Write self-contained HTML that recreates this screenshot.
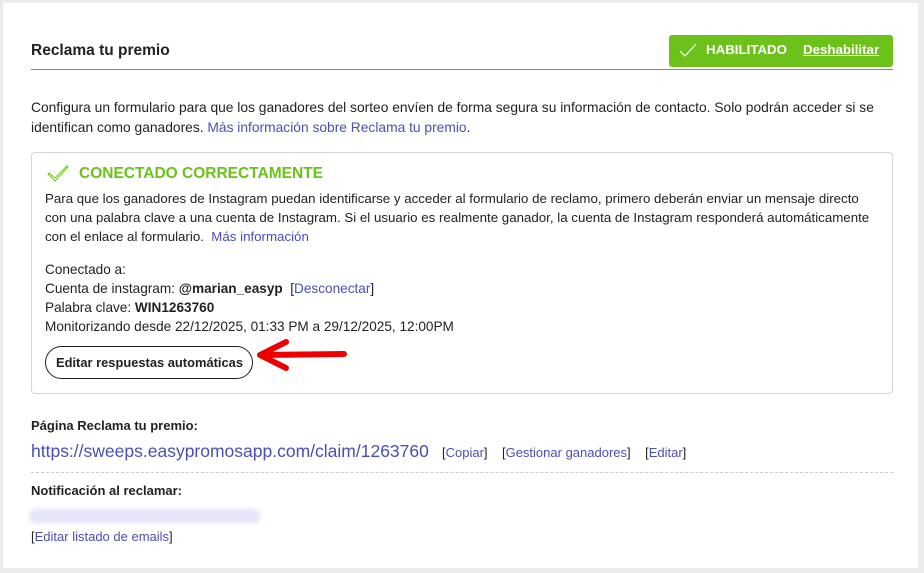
<!DOCTYPE html>
<html><head><meta charset="utf-8"><style>
*{margin:0;padding:0;box-sizing:border-box}
body{width:924px;height:573px;background:#ececec;font-family:"Liberation Sans",sans-serif;color:#222;position:relative;overflow:hidden}
.card{position:absolute;left:3px;top:3px;width:915px;height:565px;background:#fff}
.a{position:absolute;white-space:nowrap;font-size:13px}
.l{color:#4a4fb5}
b{font-weight:bold}
</style></head><body>
<div class="card"></div>
<div class="a" style="left:31px;top:42px;font-size:15.5px;font-weight:bold;color:#222">Reclama tu premio</div>
<div style="position:absolute;left:31px;top:69px;width:862px;height:1px;background:#888"></div>
<div style="position:absolute;left:669px;top:35px;width:224px;height:32px;background:#6cc11b;border-radius:3px"></div>
<svg style="position:absolute;left:679px;top:42px" width="18" height="16"><path d="M1 9 L6 14 L17 2" stroke="#fff" stroke-width="1.2" fill="none"/></svg>
<div class="a" style="left:706px;top:42px;color:#fff;font-weight:bold;font-size:13.3px">HABILITADO</div>
<div class="a" style="left:803px;top:42px;color:#fff;font-weight:bold;font-size:13.3px;text-decoration:underline">Deshabilitar</div>
<div class="a" style="left:31px;top:98px;line-height:20px;font-size:13.8px">Configura un formulario para que los ganadores del sorteo envíen de forma segura su información de contacto. Solo podrán acceder si se<br>identifican como ganadores. <span class="l">Más información sobre Reclama tu premio</span>.</div>
<div style="position:absolute;left:31px;top:152px;width:862px;height:242px;border:1px solid #d5d5d5;border-radius:4px"></div>
<svg style="position:absolute;left:46px;top:164px" width="24" height="20"><path d="M2 10 L9 17 L22 3 L21 2 L9 14 L3 9 Z" stroke="#6cc11b" stroke-width="1" fill="none"/></svg>
<div class="a" style="left:79px;top:165px;color:#6cc11b;font-weight:bold;font-size:15.5px">CONECTADO CORRECTAMENTE</div>
<div class="a" style="left:45px;top:189px;line-height:19px;font-size:13.3px">Para que los ganadores de Instagram puedan identificarse y acceder al formulario de reclamo, primero deberán enviar un mensaje directo<br>con una palabra clave a una cuenta de Instagram. Si el usuario es realmente ganador, la cuenta de Instagram responderá automáticamente<br>con el enlace al formulario.&nbsp; <span class="l">Más información</span></div>
<div class="a" style="left:45px;top:260px;line-height:19px;font-size:13.6px">Conectado a:<br>Cuenta de instagram: <b>@marian_easyp</b>&nbsp; [<span class="l">Desconectar</span>]<br>Palabra clave: <b>WIN1263760</b><br>Monitorizando desde 22/12/2025, 01:33 PM a 29/12/2025, 12:00PM</div>
<div style="position:absolute;left:45px;top:346px;width:208px;height:33px;border:1px solid #222;border-radius:17px"></div>
<div class="a" style="left:56px;top:355px;font-weight:bold;font-size:12.9px">Editar respuestas automáticas</div>
<svg style="position:absolute;left:250px;top:337px" width="100" height="40"><path d="M94 17 L12 18" stroke="#e00" stroke-width="6" stroke-linecap="round"/><path d="M36 5 L10 18 L36 31" stroke="#e00" stroke-width="6" fill="none" stroke-linecap="round" stroke-linejoin="round"/></svg>
<div class="a" style="left:31px;top:418px;font-weight:bold">Página Reclama tu premio:</div>
<div class="a" style="left:31px;top:441px;font-size:17.5px" ><span class="l">https://sweeps.easypromosapp.com/claim/1263760</span></div>
<div class="a" style="left:442px;top:445px">[<span class="l">Copiar</span>]&nbsp;&nbsp;&nbsp; [<span class="l">Gestionar ganadores</span>]&nbsp;&nbsp;&nbsp; [<span class="l">Editar</span>]</div>
<div style="position:absolute;left:31px;top:472px;width:862px;border-top:1px dashed #ccc"></div>
<div class="a" style="left:31px;top:483px;font-weight:bold">Notificación al reclamar:</div>
<div style="position:absolute;left:29px;top:509px;width:231px;height:14px;background:#e4e6f7;border-radius:6px;filter:blur(2px)"></div>
<div class="a" style="left:31px;top:529px">[<span class="l">Editar listado de emails</span>]</div>
</body></html>
